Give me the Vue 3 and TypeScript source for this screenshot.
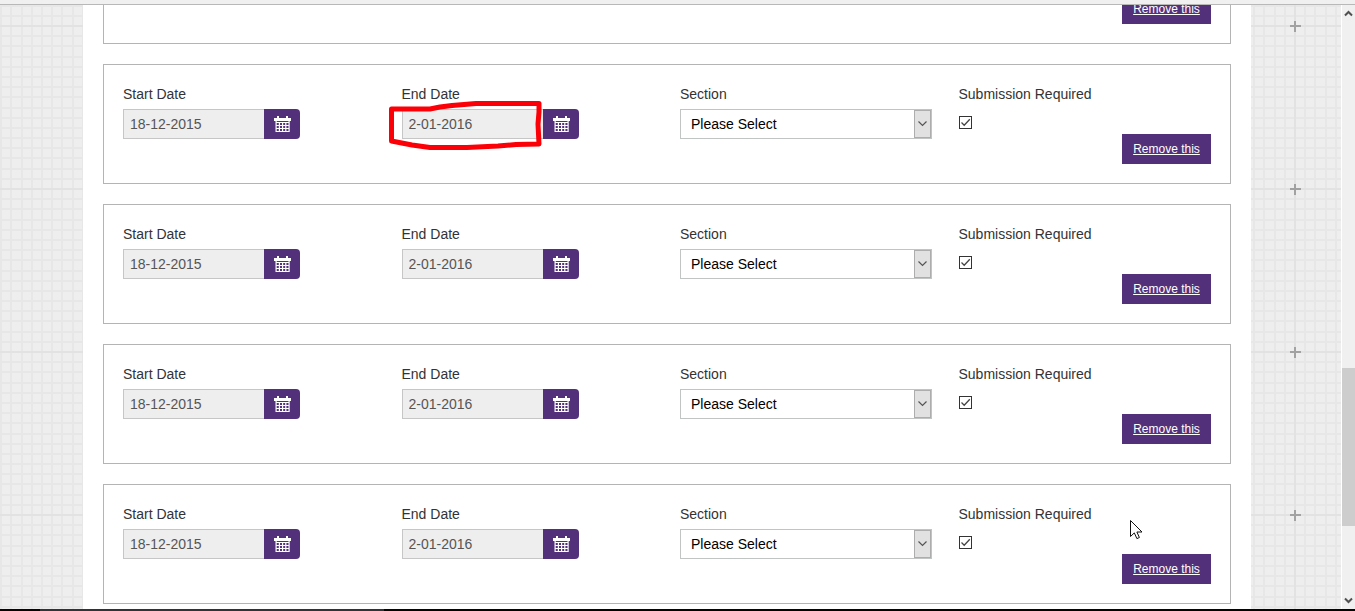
<script setup lang="ts">
import { ref } from 'vue'

interface Slot {
  id: number
  start: string
  end: string
  section: string
  required: boolean
  marked: boolean
  pointer: boolean
}

const slots = ref<Slot[]>(
  [1, 2, 3, 4].map((id) => ({
    id,
    start: '18-12-2015',
    end: '2-01-2016',
    section: '',
    required: true,
    marked: id === 1,
    pointer: id === 4,
  })),
)

const CELL = 163
const lines = Array.from({ length: 16 }, (_, i) => Math.round((i * CELL) / 16))

// Calendar glyph: rings, header bar, then a ruled grid of four columns by three rows
const calendar =
  'M3 0h2v2h7V0h2v2h3v3H0V2h3z' +
  'M1.500 5h1.200v11H1.500zM4.800 6h1.200v10H4.800zM8 6h1.200v10H8zM11.200 6h1.200v10h-1.200zM14.500 5h1.200v11h-1.200z' +
  'M1.500 6h14.200v1H1.500zM1.500 9h14.200v1H1.500zM1.500 12h14.200v1H1.500zM1.500 15h14.200v1H1.500z'

function remove(id: number) {
  slots.value = slots.value.filter((s) => s.id !== id)
}
</script>

<template>
  <div class="window">
    <div class="toolbar-edge"></div>
    <div class="viewport">
      <main class="page">
        <svg class="grid" aria-hidden="true">
          <defs>
            <pattern id="paper" :width="CELL" :height="CELL" x="153" y="20" patternUnits="userSpaceOnUse">
              <g fill="#e7e7e7">
                <rect v-for="p in lines" :key="'v' + p" :x="p" y="0" width="2" :height="CELL" />
                <rect v-for="p in lines" :key="'h' + p" x="0" :y="p" :width="CELL" height="2" />
              </g>
              <path d="M0 0h2v163H0zM0 0h163v2H0z" fill="#e2e2e2" />
              <path d="M0 0h7v2H0zM0 0h2v7H0zM159 0h4v2h-4zM0 159h2v4H0z" fill="#a2a2a2" />
            </pattern>
          </defs>
          <rect width="100%" height="100%" fill="url(#paper)" />
        </svg>

        <form class="sheet" @submit.prevent>
          <section class="card trailing">
            <button type="button" class="remove">Remove this</button>
          </section>

          <section v-for="s in slots" :key="s.id" class="card">
            <div class="field">
              <label :for="'start-' + s.id">Start Date</label>
              <div class="date">
                <input :id="'start-' + s.id" v-model="s.start" type="text" readonly />
                <button type="button" class="pick" aria-label="Choose start date">
                  <svg width="17" height="16" viewBox="0 0 17 16" aria-hidden="true"><path fill="#fff" :d="calendar" /></svg>
                </button>
              </div>
            </div>

            <div class="field">
              <label :for="'end-' + s.id">End Date</label>
              <div class="date">
                <input :id="'end-' + s.id" v-model="s.end" type="text" readonly />
                <button type="button" class="pick" aria-label="Choose end date">
                  <svg width="17" height="16" viewBox="0 0 17 16" aria-hidden="true"><path fill="#fff" :d="calendar" /></svg>
                </button>
              </div>
              <svg v-if="s.marked" class="mark" width="156" height="52" viewBox="388 100 156 52" aria-hidden="true">
                <path d="M391.500 109H430L440 107L452 105.500L476 103.500L539 103.500V112L538 124L539 144L516 144.500L498 146L467 147.500H430L412 145L391.500 141Z" fill="none" stroke="#fb0007" stroke-width="5" stroke-linejoin="round" />
              </svg>
            </div>

            <div class="field">
              <label :for="'section-' + s.id">Section</label>
              <div class="choice">
                <select :id="'section-' + s.id" v-model="s.section">
                  <option value="">Please Select</option>
                </select>
                <span class="arrow" aria-hidden="true">
                  <svg width="9" height="6" viewBox="0 0 9 6"><path d="M0.500 0.500L4.500 4.500L8.500 0.500" fill="none" stroke="#555" stroke-width="1.200" /></svg>
                </span>
              </div>
            </div>

            <div class="field">
              <label :for="'required-' + s.id">Submission Required</label>
              <span class="tick">
                <input :id="'required-' + s.id" v-model="s.required" type="checkbox" />
                <svg v-if="s.required" width="13" height="13" viewBox="0 0 13 13" aria-hidden="true"><path d="M2.500 6.500L5.200 9.200L10.800 3.200" fill="none" stroke="#444" stroke-width="1.300" /></svg>
              </span>
              <button type="button" class="remove" @click="remove(s.id)">Remove this</button>
              <svg v-if="s.pointer" class="pointer" width="13" height="20" viewBox="0 0 13 20" aria-hidden="true">
                <path d="M0.500 0.500V16.500L4.300 12.900L6.900 18.600L9.400 17.500L6.900 12H12Z" fill="#fff" stroke="#111" stroke-width="1" />
              </svg>
            </div>
          </section>
        </form>
      </main>

      <div class="scrollbar" aria-hidden="true">
        <svg width="9" height="7" viewBox="0 0 9 7"><path d="M1 5.500L4.500 2L8 5.500" fill="none" stroke="#505050" stroke-width="2" /></svg>
        <div class="track">
          <div class="before"></div>
          <div class="thumb"></div>
          <div class="after"></div>
        </div>
        <svg width="9" height="7" viewBox="0 0 9 7"><path d="M1 1.500L4.500 5L8 1.500" fill="none" stroke="#505050" stroke-width="2" /></svg>
      </div>
    </div>
    <div class="taskbar"></div>
  </div>
</template>

<style>
body {
  margin: 0;
}
</style>

<style scoped>
* {
  box-sizing: border-box;
}

.window {
  display: flex;
  flex-direction: column;
  height: 100vh;
  overflow: hidden;
  background: #fff;
  color: #333;
  font-family: "Liberation Sans", Arial, sans-serif;
  font-size: 14px;
  line-height: 20px;
}

.toolbar-edge {
  flex: none;
  height: 5px;
  background: #f0f0f0;
  border-bottom: 1px solid #b8b8b8;
}

.viewport {
  flex: 1;
  display: flex;
  min-height: 0;
}

.page {
  position: relative;
  flex: 1;
  display: flex;
  min-width: 0;
  padding: 0 90px 0 83px;
  overflow: hidden;
  background: #eee;
  border-right: 1px solid #fff;
}

.grid {
  position: absolute;
  inset: 0;
  width: 100%;
  height: 100%;
}

.sheet {
  position: relative;
  flex: 1;
  display: flex;
  flex-direction: column;
  justify-content: flex-end;
  gap: 20px;
  min-width: 0;
  padding: 0 20px 5px;
  background: #fff;
}

.card {
  flex: none;
  display: grid;
  grid-template-columns: repeat(4, minmax(0, 1fr));
  gap: 26px;
  padding: 19px;
  border: 1px solid #b4b4b4;
}

.card.trailing {
  display: flex;
  justify-content: flex-end;
}

.field {
  position: relative;
  display: flex;
  flex-direction: column;
  align-items: flex-start;
}

.date {
  display: flex;
  width: 177px;
  height: 30px;
  margin-top: 5px;
}

.date input {
  flex: 1;
  min-width: 0;
  padding: 0 6px;
  border: 1px solid #c6c6c6;
  border-right: 0;
  border-radius: 0;
  background: #eee;
  color: #555;
  font: inherit;
  outline: none;
}

.pick {
  display: flex;
  align-items: center;
  justify-content: center;
  width: 36px;
  padding: 0 0 0 1px;
  border: 0;
  border-radius: 0 4px 4px 0;
  background: #52317a;
}

.mark {
  position: absolute;
  top: 16px;
  left: -14px;
  pointer-events: none;
}

.choice {
  position: relative;
  width: calc(100% - 1px);
  height: 30px;
  margin-top: 5px;
}

.choice select {
  display: block;
  width: 100%;
  height: 100%;
  padding: 0 28px 0 10px;
  border: 1px solid #c0c4c2;
  border-radius: 0;
  background: #fff;
  color: #000;
  font: inherit;
  appearance: none;
}

.arrow {
  position: absolute;
  top: 1px;
  right: 1px;
  bottom: 1px;
  display: flex;
  align-items: center;
  justify-content: center;
  width: 17px;
  border: 1px solid #adadad;
  background: #e1e1e1;
  pointer-events: none;
}

.tick {
  position: relative;
  width: 13px;
  height: 13px;
  margin-top: 12px;
}

.tick input {
  display: block;
  width: 13px;
  height: 13px;
  margin: 0;
  border: 1px solid #333;
  background: #fff;
  appearance: none;
}

.tick svg {
  position: absolute;
  inset: 0;
  pointer-events: none;
}

.remove {
  align-self: flex-end;
  height: 30px;
  min-width: 89px;
  margin-top: 5px;
  padding: 0 10px;
  border: 0;
  background: #52317a;
  color: #fff;
  font-family: inherit;
  font-size: 12px;
  text-decoration: underline;
}

.trailing .remove {
  margin-top: 0;
}

.pointer {
  position: absolute;
  top: 16px;
  right: 68px;
  pointer-events: none;
}

.scrollbar {
  display: flex;
  flex-direction: column;
  align-items: center;
  gap: 6px;
  width: 13px;
  padding: 5px 0;
  background: #f0f0f0;
}

.scrollbar svg {
  flex: none;
}

.track {
  flex: 1;
  display: flex;
  flex-direction: column;
  width: 100%;
}

.before {
  flex: 345;
}

.thumb {
  flex: 158;
  background: #cdcdcd;
}

.after {
  flex: 65;
}

.taskbar {
  flex: none;
  height: 2px;
  background: linear-gradient(90deg, #080404 40px, #2f3335 40px, #2f3335 384px, #060303 384px);
}
</style>
